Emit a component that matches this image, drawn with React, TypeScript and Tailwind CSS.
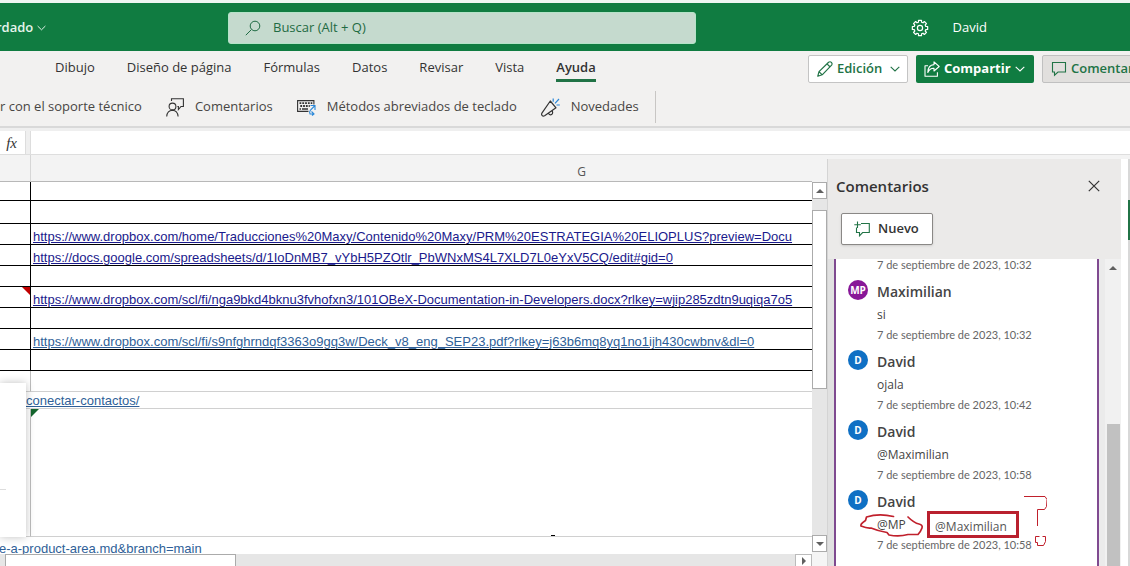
import type { ReactNode } from "react";

const tabs = ["Dibujo", "Diseño de página", "Fórmulas", "Datos", "Revisar", "Vista", "Ayuda"];

type Row = {
  size: string;
  line: string;
  divider: string;
  href?: string;
  tone?: string;
  note?: boolean;
  left?: string;
  flag?: boolean;
};

const dark = "border-b-black";
const pale = "border-b-[#d0d0d0]";

const rows: Row[] = [
  { size: "h-[19px]", line: dark, divider: "border-r-black" },
  { size: "h-[23px]", line: dark, divider: "border-r-black" },
  {
    size: "h-[21px]",
    line: dark,
    divider: "border-r-black",
    tone: "text-[#1a1a8c]",
    href: "https://www.dropbox.com/home/Traducciones%20Maxy/Contenido%20Maxy/PRM%20ESTRATEGIA%20ELIOPLUS?preview=Docu",
  },
  {
    size: "h-[21px]",
    line: dark,
    divider: "border-r-black",
    tone: "text-[#1a1a8c]",
    href: "https://docs.google.com/spreadsheets/d/1IoDnMB7_vYbH5PZOtlr_PbWNxMS4L7XLD7L0eYxV5CQ/edit#gid=0",
  },
  { size: "h-[21px]", line: dark, divider: "border-r-black" },
  {
    size: "h-[21px]",
    line: dark,
    divider: "border-r-black",
    tone: "text-[#1a1a8c]",
    note: true,
    href: "https://www.dropbox.com/scl/fi/nga9bkd4bknu3fvhofxn3/101OBeX-Documentation-in-Developers.docx?rlkey=wjip285zdtn9uqiqa7o5",
  },
  { size: "h-[21px]", line: dark, divider: "border-r-black" },
  {
    size: "h-[21px]",
    line: dark,
    divider: "border-r-black",
    tone: "text-[#2f5f98]",
    href: "https://www.dropbox.com/scl/fi/s9nfghrndqf3363o9gq3w/Deck_v8_eng_SEP23.pdf?rlkey=j63b6mq8yq1no1ijh430cwbnv&dl=0",
  },
  { size: "h-[21px]", line: dark, divider: "border-r-black" },
  { size: "h-[21px]", line: pale, divider: "border-r-[#bdbdbd]" },
  { size: "h-[17px]", line: pale, divider: "border-r-transparent", left: "conectar-contactos/" },
  { size: "h-[128px]", line: pale, divider: "border-r-[#bdbdbd]", flag: true },
  { size: "h-[16px]", line: "border-b-transparent", divider: "border-r-transparent", left: "e-a-product-area.md&branch=main" },
];

const comments = [
  { who: "Maximilian", initials: "MP", color: "bg-[#881798]", text: "si", date: "7 de septiembre de 2023, 10:32" },
  { who: "David", initials: "D", color: "bg-[#0f70c4]", text: "ojala", date: "7 de septiembre de 2023, 10:42" },
  { who: "David", initials: "D", color: "bg-[#0f70c4]", text: "@Maximilian", date: "7 de septiembre de 2023, 10:58" },
  { who: "David", initials: "D", color: "bg-[#0f70c4]", text: "@MP", date: "7 de septiembre de 2023, 10:58", marked: true },
];

function Chevron({ className }: { className: string }) {
  return (
    <svg viewBox="0 0 10 6" className={className} fill="none" stroke="currentColor" strokeWidth="1.1">
      <path d="M.7.8 5 5 9.3.8" />
    </svg>
  );
}

function Gear() {
  const teeth = Array.from({ length: 8 }, (_, i) => {
    const at = (r: number, deg: number) => {
      const a = ((i * 45 + deg) * Math.PI) / 180;
      return `${(9 + r * Math.cos(a)).toFixed(2)} ${(9 + r * Math.sin(a)).toFixed(2)}`;
    };
    return `${at(6, -15)} L${at(7.8, -11)} L${at(7.8, 11)} L${at(6, 15)}`;
  }).join(" L");
  return (
    <svg viewBox="0 0 18 18" className="size-[18px]" fill="none" stroke="currentColor" strokeWidth="1.2" strokeLinejoin="round">
      <path d={`M${teeth} Z`} />
      <circle cx="9" cy="9" r="2.6" />
    </svg>
  );
}

function Tool({ icon, children, gap }: { icon: ReactNode; children: string; gap: string }) {
  return (
    <button type="button" className={`flex items-center whitespace-nowrap ${gap}`}>
      {icon}
      {children}
    </button>
  );
}

function Triangle({ d }: { d: string }) {
  return (
    <svg viewBox="0 0 8 8" className="size-2 fill-[#606060]">
      <path d={d} />
    </svg>
  );
}

function TopBar() {
  return (
    <header className="flex h-[51px] shrink-0 items-center border-t-3 border-[#eef6f2] bg-[#107c41] pt-px text-[13px] text-white">
      <button type="button" className="flex w-[228px] items-center gap-1 text-left text-[#e6f5ec]">
        <span className="-ml-1 font-semibold">rdado</span>
        <Chevron className="h-[6px] w-[9px]" />
      </button>
      <label className="flex h-8 w-[468px] items-center gap-3 rounded-[3px] border border-[#b5e3c8] bg-[#c5dace] pl-4 text-[#1f6b43]">
        <svg viewBox="0 0 16 16" className="size-4 shrink-0" fill="none" stroke="currentColor" strokeWidth="1">
          <circle cx="10" cy="6" r="4.8" />
          <path d="M6.4 9.6.8 15.2" />
        </svg>
        <input
          type="search"
          aria-label="Buscar"
          placeholder="Buscar (Alt + Q)"
          className="min-w-0 flex-1 bg-transparent placeholder:text-[#1f6b43] placeholder:opacity-100 focus:outline-none"
        />
      </label>
      <div className="ml-auto flex items-center gap-6 pr-[143px]">
        <button type="button" aria-label="Configuración">
          <Gear />
        </button>
        <button type="button">David</button>
      </div>
    </header>
  );
}

function Ribbon() {
  return (
    <div className="flex h-[77px] shrink-0 flex-col border-b-2 border-[#d9d9d9] bg-[#f2f1f0] text-[13px] text-[#333]">
      <div className="flex h-9 items-start">
        <nav className="flex gap-8 pt-px pl-[55px]">
          {tabs.map((t) => (
            <button
              key={t}
              type="button"
              className={
                t === "Ayuda"
                  ? "h-[30px] border-b-3 border-[#217346] pt-[5px] font-semibold whitespace-nowrap"
                  : "h-[31px] whitespace-nowrap"
              }
            >
              {t}
            </button>
          ))}
        </nav>
        <div className="-mr-6 ml-auto flex gap-2 pt-1 font-semibold">
          <button type="button" className="flex h-7 w-[100px] items-center gap-1 rounded-[2px] border border-[#c4c4c4] bg-white pl-2 text-[#217346]">
            <svg viewBox="0 0 16 16" className="size-4" fill="none" stroke="currentColor" strokeWidth="1.2" strokeLinejoin="round">
              <path d="M.8 15.2 2 10.6 11.6 1.2q1.6-1 2.8.2 1.2 1.3.2 2.8L5.2 13.8ZM10 2.8l3.2 3.2M2 10.6l3.2 3.2" />
            </svg>
            Edición
            <Chevron className="ml-1 h-[6px] w-[10px]" />
          </button>
          <button type="button" className="flex h-7 w-[118px] items-center gap-1 rounded-[2px] bg-[#107c41] pl-2 font-bold text-white">
            <svg viewBox="0 0 16 16" className="size-4 shrink-0" fill="none" stroke="currentColor" strokeWidth="1.1" strokeLinejoin="round">
              <path d="M4 4.8H1v10.4h12.400v-4M10 .900l5.200 4.600L10 10V7.300Q6 7 3.800 11.400 4 4 10 3.600Z" />
            </svg>
            Compartir
            <Chevron className="h-[6px] w-[10px]" />
          </button>
          <button type="button" className="flex h-7 w-[112px] items-center gap-1 rounded-[2px] border border-[#c0c0c0] bg-[#e1dfdd] pl-2 whitespace-nowrap text-[#217346]">
            <svg viewBox="0 0 16 16" className="size-4 shrink-0" fill="none" stroke="currentColor" strokeWidth="1.1">
              <path d="M1.500 1.500h13v9.500H7L3.500 14.200V11h-2Z" />
            </svg>
            Comentarios
          </button>
        </div>
      </div>
      <div className="flex h-[39px] items-center gap-6 pt-px text-[#484644]">
        <button type="button" className="whitespace-nowrap">r con el soporte técnico</button>
        <Tool
          gap="gap-[11px]"
          icon={
            <svg viewBox="0 0 18 19" className="h-[19px] w-[18px]" fill="none" stroke="#333" strokeWidth="1.1">
              <circle cx="6.500" cy="8.500" r="3.400" />
              <path d="M.7 18.500Q1.200 12.400 6.500 12.300q5 .1 5.600 6.200M5.500 3V.7h11.900v7.800H15l-2.600 3V8.500h-1" />
            </svg>
          }
        >
          Comentarios
        </Tool>
        <Tool
          gap="gap-[11px]"
          icon={
            <svg viewBox="0 0 19 18" className="h-[18px] w-[19px]" fill="none" stroke="#333" strokeWidth="1.1">
              <path d="M11.500 13.400H.600V2.600h16.300v4" />
              <path strokeWidth="1.800" strokeDasharray="1.800 1" d="M2.500 5.200h12.800M3.300 8h9.500" />
              <path strokeWidth="1.500" d="M2.500 11h1.500M5 11h6" />
              <path stroke="#2b88d8" d="M13.500 7.500h4.500V12M18 7.500l-4.500 4.500q-1.500 2-.5 4h4M14.500 13.500l2.500 2.500-2 1.500" />
            </svg>
          }
        >
          Métodos abreviados de teclado
        </Tool>
        <Tool
          gap="gap-[11px]"
          icon={
            <svg viewBox="0 0 19 19" className="size-[19px]" fill="none" stroke="#333" strokeWidth="1.200" strokeLinejoin="round">
              <path d="M9.300 3 15 9.800 3.600 17.800Q2 18.500 1 17.300.200 16.300.900 15.200ZM7.500 15.200q1.300 2.500 3.400 1.100 1.300-1.100.300-3.700" />
              <path stroke="#2b88d8" d="M12.200.500v3.300M18 1l-4 4.300M15.500 7h3.300" />
            </svg>
          }
        >
          Novedades
        </Tool>
        <div className="-ml-2 h-8 w-px bg-[#c8c6c4]" />
      </div>
    </div>
  );
}

function Sheet() {
  return (
    <section className="relative flex min-w-0 flex-1 flex-col overflow-hidden">
      <table className="w-full table-fixed border-separate border-spacing-0 bg-white font-['Liberation_Sans',Arial,sans-serif] text-[13px] leading-4">
        <colgroup>
          <col className="w-[31px]" />
          <col />
        </colgroup>
        <thead>
          <tr className="h-[27px] bg-[#f3f3f3]">
            <th className="border-r border-b border-r-[#d6d6d6] border-b-[#b8b8b8] p-0" aria-label="F" />
            <th className="border-b border-[#b8b8b8] p-0 pl-[320px] align-bottom font-['Open_Sans','Noto_Sans',sans-serif] text-[12px] leading-[18px] font-normal text-[#555]">
              G
            </th>
          </tr>
        </thead>
        <tbody>
          {rows.map((r, i) => (
            <tr key={i} className={r.size}>
              <td className={`relative border-r border-b p-0 align-bottom ${r.divider} ${r.line}`}>
                {r.left && (
                  <div className="h-4">
                    <a
                      href="#enlace"
                      className={`absolute top-0 z-10 whitespace-nowrap text-[#2f5f98] underline ${i === 12 ? "-left-px pt-1" : "left-[26px] pt-px"}`}
                    >
                      {r.left}
                    </a>
                  </div>
                )}
                {r.note && <span className="absolute top-0 right-0 border-t-8 border-l-8 border-t-[#c00000] border-l-transparent" />}
              </td>
              <td className={`relative overflow-hidden border-b p-0 pl-[2px] align-bottom ${r.line}`}>
                {r.href && (
                  <a href={r.href} className={`block h-[15px] whitespace-nowrap underline ${r.tone}`}>
                    {r.href}
                  </a>
                )}
                {r.flag && <span className="absolute top-0 left-0 border-t-8 border-r-8 border-t-[#15662f] border-r-transparent" />}
                {r.flag && <span className="absolute bottom-0 left-[520px] h-px w-1 bg-black" />}
              </td>
            </tr>
          ))}
        </tbody>
      </table>
      <div className="absolute top-[228px] left-0 z-20 h-[154px] w-[26px] bg-white pt-[106px] shadow-[0_0_8px_rgba(0,0,0,0.25)]">
        <div className="h-px w-[6px] bg-[#ddd]" />
      </div>
      <div className="relative z-20 flex flex-1 justify-between bg-[#e6e6e6]">
        <div className="ml-[5px] w-[231px] border border-b-0 border-[#ababab] bg-white" />
        <button type="button" aria-label="Desplazar a la derecha" className="grid w-[17px] place-items-center border border-b-0 border-[#bbb] bg-white">
          <Triangle d="M2 0l4 4-4 4z" />
        </button>
      </div>
    </section>
  );
}

function SheetScroll() {
  return (
    <div className="flex w-[15px] shrink-0 flex-col bg-[#e6e6e6]">
      <div className="h-[27px] bg-[#f3f3f3]" />
      <button type="button" aria-label="Subir" className="grid h-[17px] place-items-center border border-[#ababab] bg-white">
        <Triangle d="M0 6l4-4 4 4z" />
      </button>
      <div className="mt-[11px] h-[179px] border border-[#ababab] bg-white" />
      <button type="button" aria-label="Bajar" className="mt-auto grid h-[17px] place-items-center border border-[#ababab] bg-white">
        <Triangle d="M0 2l4 4 4-4z" />
      </button>
      <div className="h-[14px] bg-[#f5f5f5]" />
    </div>
  );
}

function CommentsPanel() {
  return (
    <aside className="mt-1 flex w-[294px] shrink-0 flex-col border-l border-[#d4d4d4] bg-[#ebeae9]">
      <div className="flex h-[54px] shrink-0 items-center justify-between pr-[21px] pl-2">
        <h2 className="text-[15px] font-semibold text-[#333]">Comentarios</h2>
        <button type="button" aria-label="Cerrar">
          <svg viewBox="0 0 12 12" className="size-3" stroke="#333" strokeWidth="1.200">
            <path d="M.800.800l10.400 10.400M11.200.800.800 11.200" />
          </svg>
        </button>
      </div>
      <div className="h-[46px] shrink-0 pl-[13px]">
        <button type="button" className="flex h-8 w-[92px] items-center gap-2 rounded-[2px] border border-[#8a8886] bg-white pl-3 text-[13px] font-semibold text-[#333] shadow-sm">
          <svg viewBox="0 0 16 16" className="size-4" fill="none" stroke="#217346" strokeWidth="1.100">
            <path d="M7 2.500h8.300v9H8.600L5.500 14.800v-3.300h-3V6.500M3.500.500v6.500M.300 3.800h6.500" />
          </svg>
          Nuevo
        </button>
      </div>
      <div className="flex min-h-0 flex-1">
        <div className="w-[6px] bg-[#e1e1e1]" />
        <div className="flex-1 overflow-hidden border-x-2 border-[#7f4a90] bg-white pl-3">
          <div className="h-[21px] pl-[29px] font-['Lato',sans-serif] text-[11px] leading-3 text-[#666]">
            7 de septiembre de 2023, 10:32
          </div>
          {comments.map((c, i) => (
            <article key={i} className="flex h-[70px] gap-[9px]">
              <div className={`grid size-5 shrink-0 place-items-center rounded-full text-[10px] font-bold text-white ${c.color}`}>
                {c.initials}
              </div>
              <div className="relative flex-1 whitespace-nowrap">
                <h3 className="h-6 text-[14px] leading-6 font-semibold text-[#444]">{c.who}</h3>
                <p className="h-[22px] text-[12px] leading-[22px] text-[#444]">{c.text}</p>
                <p className="font-['Lato',sans-serif] text-[11px] leading-[18px] text-[#666]">{c.date}</p>
                {c.marked && (
                  <>
                    <span className="absolute top-[21px] left-[50px] grid h-[27px] w-[92px] place-items-center border-3 border-[#b9202e] pt-1 pr-1 text-[12px] leading-none text-[#555]">
                      @Maximilian
                    </span>
                    <svg viewBox="0 0 190 64" className="absolute -top-1 -left-5 h-16 w-[190px]" fill="none" stroke="#c0202c">
                      <path
                        strokeWidth="1.700"
                        strokeLinecap="round"
                        strokeLinejoin="round"
                        d="M36.500 30.500Q22 27 9.500 31L8.500 34.500Q3 38 4 40 10 42.500 14 42 21 45 30 46.500L32 49q10 2 19-.5h10Q64 45 65 42 66 39 62 38 57 37 51 31"
                      />
                      <path strokeWidth="1" d="M167 10.500h21l2 3-.5 7-2 3h-7V40M182.500 50.500h-4v6h2v3h6l2-4v-5h-3" />
                    </svg>
                  </>
                )}
              </div>
            </article>
          ))}
        </div>
        <div className="w-[6px] bg-[#ebebeb]" />
        <div className="flex w-4 flex-col items-center bg-[#f1f1f1] pt-[5px]">
          <Triangle d="M0 6l4-4 4 4z" />
          <div className="mt-[152px] w-[13px] flex-1 bg-[#c1c1c1]" />
        </div>
      </div>
    </aside>
  );
}

export default function App() {
  return (
    <div className="flex h-screen w-full flex-col overflow-hidden bg-[#f3f3f3] font-['Open_Sans','Noto_Sans',sans-serif]">
      <TopBar />
      <Ribbon />
      <div className="flex h-[27px] shrink-0 gap-1 border-b border-[#dedede] bg-[#efefef] pt-[3px]">
        <div className="w-[26px] border-r border-[#ddd] bg-white pr-2 text-right font-['Liberation_Serif',serif] text-[15px] leading-6 text-[#333] italic">
          fx
        </div>
        <input aria-label="Barra de fórmulas" className="min-w-0 flex-1 border-l border-[#ddd] bg-white focus:outline-none" />
      </div>
      <main className="flex min-h-0 flex-1">
        <Sheet />
        <SheetScroll />
        <CommentsPanel />
        <div className="flex w-[9px] shrink-0 flex-col items-end bg-[#f3f3f3] pt-1">
          <div className="flex w-full flex-1 flex-col items-end bg-white">
            <div className="h-[41px] w-[2px] bg-[#d8d8d8]" />
            <div className="h-10 w-[2px] bg-[#217346]" />
            <div className="w-[2px] flex-1 bg-[#d8d8d8]" />
          </div>
        </div>
      </main>
    </div>
  );
}
